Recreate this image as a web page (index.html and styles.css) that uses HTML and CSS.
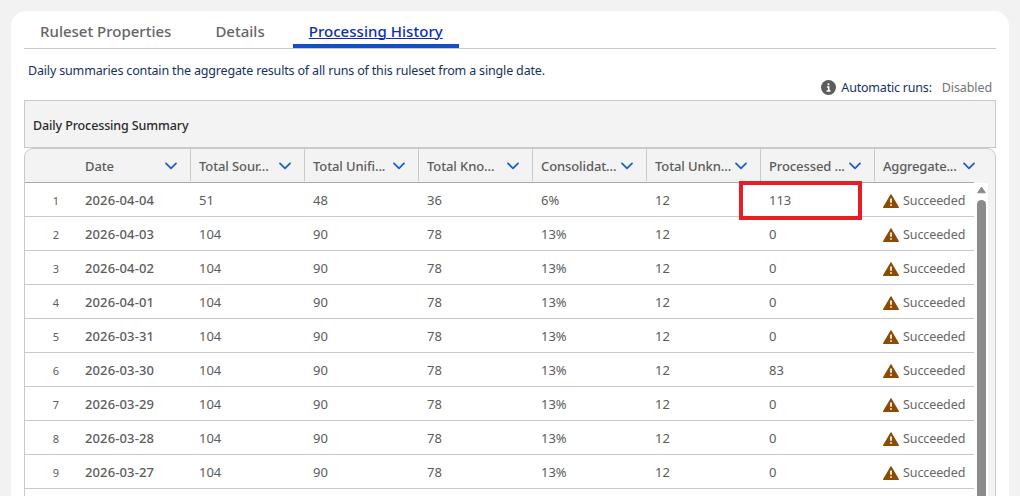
FILE: index.html
```
<!DOCTYPE html>
<html>
	<head>
		<meta charset="UTF-8">
		<title>Processing History</title>
		<link rel="stylesheet" href="styles.css">
	</head>
	<body>
		<svg class="defs">
			<symbol id="arrow" viewBox="0 0 12 8"><path d="M1 1.4l5 5 5-5" fill="none" stroke="#1b5fc8" stroke-width="1.8" stroke-linecap="round" stroke-linejoin="round"/></symbol>
			<symbol id="warning" viewBox="0 0 16 14"><path d="M8 .8L15.4 13.4H.6z" fill="#8c4b02" stroke="#8c4b02" stroke-width="1.1" stroke-linejoin="round"/><path d="M8 4.6v4.2M8 10.3v1.5" stroke="#fff" stroke-width="1.7"/></symbol>
		</svg>
		<div class="card">
			<ul class="tabs">
				<li><span>Ruleset Properties</span></li>
				<li><span>Details</span></li>
				<li class="active"><span>Processing History</span></li>
			</ul>
			<p class="desc"><span>Daily summaries contain the aggregate results of all runs of this ruleset from a single date.</span></p>
			<div class="runs">
				<svg class="info" viewBox="0 0 14 14"><circle cx="7" cy="7" r="7" fill="#5c5c5c"/><path d="M7 3v1.8M5.5 6.5H7.2V10M5.2 10.2h3.7" fill="none" stroke="#fff" stroke-width="1.5"/></svg>
				<span class="label">Automatic runs:</span>
				<span class="value">Disabled</span>
			</div>
			<div class="panel"><span>Daily Processing Summary</span></div>
			<div class="grid">
				<div class="row head" id="head"></div>
				<div class="main">
					<div class="rows" id="rows"></div>
					<div class="scroll">
						<svg class="up" viewBox="0 0 9 8"><path d="M4.5 1L8.3 6.8H.7z" fill="#8b8b8b" stroke="#8b8b8b" stroke-linejoin="round"/></svg>
						<div class="thumb"></div>
					</div>
				</div>
				<div class="mark"></div>
			</div>
		</div>
		<script type="text/javascript">
			var titles = ["Date","Total Sour...","Total Unifi...","Total Kno...","Consolidat...","Total Unkn...","Processed ...","Aggregate..."];
			var data = [
				["2026-04-04","51","48","36","6%","12","113"],
				["2026-04-03","104","90","78","13%","12","0"],
				["2026-04-02","104","90","78","13%","12","0"],
				["2026-04-01","104","90","78","13%","12","0"],
				["2026-03-31","104","90","78","13%","12","0"],
				["2026-03-30","104","90","78","13%","12","83"],
				["2026-03-29","104","90","78","13%","12","0"],
				["2026-03-28","104","90","78","13%","12","0"],
				["2026-03-27","104","90","78","13%","12","0"]
			];
			var html = '<div></div>';
			for(var i = 0; i < titles.length; i++){
				html += '<div class="th"><span>' + titles[i] + '</span><svg class="arrow"><use href="#arrow"/></svg></div>';
			}
			document.getElementById("head").innerHTML = html;
			html = "";
			for(var i = 0; i < data.length; i++){
				html += '<div class="row"><div class="num">' + (i+1) + '</div>';
				for(var j = 0; j < data[i].length; j++){
					html += '<div class="' + (j==0 ? "td date" : "td") + '"><span>' + data[i][j] + '</span></div>';
				}
				html += '<div class="td status"><svg class="warning"><use href="#warning"/></svg><span>Succeeded</span></div></div>';
			}
			document.getElementById("rows").innerHTML = html;
		</script>
	</body>
</html>
```
FILE: styles.css
```
*{
	box-sizing: border-box;
}
body,ul,li,p{
	margin: 0;
	padding: 0;
}
body{
	height: 496px;
	padding: 11px 11px 0;
	overflow: hidden;
	background: #f2f2f2;
	font-family: "Noto Sans","Open Sans",sans-serif;
	font-size: 13px;
	color: #5c5c5c;
}
li{
	list-style: none;
}
svg{
	display: block;
	flex: none;
}
.defs{
	display: none;
}
.card{
	height: 500px;
	padding: 0 13px;
	background: #fff;
	border-radius: 15px 15px 0 0;
}
/*tabs*/
.tabs{
	display: flex;
	height: 38px;
	border-bottom: 1px solid #c9c9c9;
	font-size: 15px;
	font-weight: 500;
	line-height: 41px;
	color: #666;
}
.tabs li{
	height: 37px;
	padding: 0 16px;
	margin-right: 12px;
}
.tabs .active{
	border-bottom: 4px solid #1450bd;
	letter-spacing: .04px;
	color: #0b2fb0;
}
.tabs .active span{
	text-decoration: underline;
	text-decoration-thickness: 1px;
}
.desc{
	height: 28px;
	padding: 13px 4px 0;
	line-height: 18px;
	font-size: 12.5px;
	letter-spacing: -.165px;
	color: #16325c;
}
.runs{
	display: flex;
	align-items: center;
	justify-content: flex-end;
	height: 23px;
	padding: 0 4px 2px 0;
	font-size: 12.5px;
}
.info{
	width: 15px;
	height: 15px;
	margin-right: 5px;
}
.label{
	margin-right: 10px;
	letter-spacing: -.2px;
	color: #16325c;
}
.value{
	letter-spacing: -.1px;
	color: #747474;
}
.panel{
	height: 48px;
	padding: 0 8px;
	border: 1px solid #c9c9c9;
	background: #f3f3f3;
	line-height: 49px;
	font-size: 12.5px;
	font-weight: 500;
	letter-spacing: -.12px;
	color: #2b2b2b;
}
/*table*/
.grid{
	position: relative;
	height: 360px;
	border: 1px solid #c9c9c9;
	border-radius: 9px 9px 0 0;
	background: #f3f3f3;
	overflow: hidden;
}
.row{
	display: grid;
	grid-template-columns: 52px repeat(8,114px);
	height: 34px;
	border-bottom: 1px solid #c9c9c9;
	line-height: 35px;
	overflow: hidden;
}
.head{
	width: 949px;
	border-color: #aaa;
	font-weight: 500;
	letter-spacing: -.1px;
	overflow: visible;
}
.th{
	display: flex;
	align-items: center;
	justify-content: space-between;
	height: 32px;
	padding: 2px 13px 0 8px;
	border-right: 1px solid #c9c9c9;
	white-space: nowrap;
}
.th:last-child{
	padding-right: 14px;
	border: none;
	letter-spacing: -.2px;
}
.arrow{
	width: 12px;
	height: 8px;
}
.main{
	display: flex;
	height: 340px;
}
.rows{
	width: 949px;
	background: #fff;
}
.td{
	padding-left: 8px;
	white-space: nowrap;
}
.num{
	padding-right: 18px;
	text-align: right;
	font-size: 11px;
}
.date{
	font-weight: 500;
	letter-spacing: .12px;
}
.status{
	display: flex;
	align-items: center;
	font-size: 12.5px;
	color: #666;
}
.status span{
	letter-spacing: -.1px;
}
.warning{
	width: 16px;
	height: 14px;
	margin: 1px 4px 0 0;
}
.scroll{
	width: 14px;
	padding: 3px 2px 0 3px;
	background: #fff;
}
.up{
	width: 9px;
	height: 8px;
}
.thumb{
	width: 9px;
	height: 330px;
	margin-top: 6px;
	border-radius: 5px;
	background: #8b8b8b;
}
.mark{
	position: absolute;
	left: 714px;
	top: 32px;
	width: 123px;
	height: 39px;
	border: 4px solid #e81c24;
}
```
